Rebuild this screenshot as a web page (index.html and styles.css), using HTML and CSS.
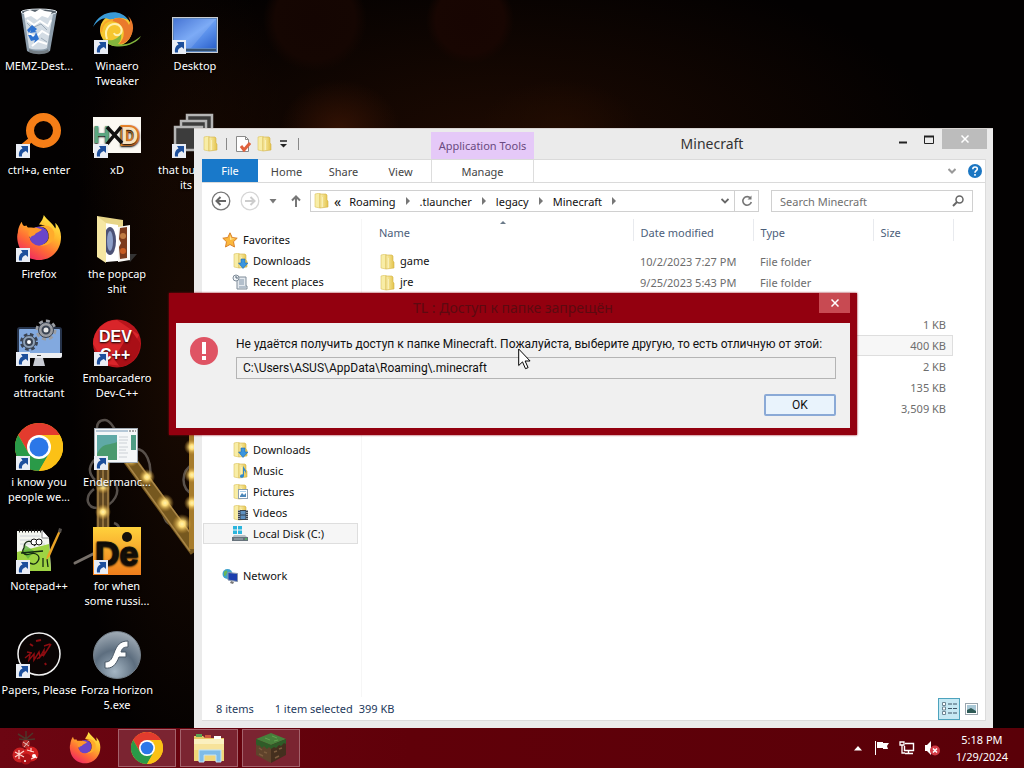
FILE: index.html
```html
<!DOCTYPE html>
<html lang="en">
<head>
  <meta charset="UTF-8">
  <meta name="viewport" content="width=device-width, initial-scale=1.0">
  <title>Desktop</title>
  <link rel="stylesheet" href="styles.css">
</head>
<body>

<!-- shared icons -->
<svg class="defs" width="0" height="0" aria-hidden="true">
  <defs>
    <linearGradient id="gFolder" x1="0" y1="0" x2="1" y2="0">
      <stop offset="0" stop-color="#fbf0ae"/><stop offset="1" stop-color="#e3c34d"/>
    </linearGradient>
    <linearGradient id="gFox" x1="0.8" y1="0" x2="0.2" y2="1">
      <stop offset="0" stop-color="#fff04a"/><stop offset="0.35" stop-color="#ffb62c"/>
      <stop offset="0.65" stop-color="#ff6b35"/><stop offset="1" stop-color="#ee1f68"/>
    </linearGradient>
    <radialGradient id="gFlash" cx="0.45" cy="0.85" r="0.9">
      <stop offset="0" stop-color="#a5b6c4"/><stop offset="0.5" stop-color="#5d6e7f"/><stop offset="1" stop-color="#aab4bd"/>
    </radialGradient>
    <radialGradient id="gGlow">
      <stop offset="0" stop-color="#fff3b0"/><stop offset="0.3" stop-color="#ffdf7a"/><stop offset="1" stop-color="#c08a2a" stop-opacity="0"/>
    </radialGradient>
    <linearGradient id="gScreen" x1="0" y1="0" x2="1" y2="1">
      <stop offset="0" stop-color="#2f63cf"/><stop offset="0.5" stop-color="#6ba0f5"/><stop offset="1" stop-color="#2c62cc"/>
    </linearGradient>
    <linearGradient id="gDe" x1="0" y1="0" x2="0" y2="1">
      <stop offset="0" stop-color="#ffd23c"/><stop offset="1" stop-color="#ef7d1c"/>
    </linearGradient>
    <symbol id="shortcut" viewBox="0 0 14 14">
      <rect width="14" height="14" fill="#e9edf5"/>
      <path d="M3 12.500C2.500 8 4 5.500 6.500 4.500L5 2h7v7L9.800 6.900C7 8 5.500 9.500 6 12.500z" fill="#1d4f9c"/>
    </symbol>
    <symbol id="folder" viewBox="0 0 16 16">
      <path d="M2 1l5-1v15l-5-1z" fill="#f8eda6" stroke="#dcc25e" stroke-width=".6"/>
      <path d="M7 1h6l1 1v5l1 1v6l-8 1z" fill="url(#gFolder)" stroke="#d3b244" stroke-width=".6"/>
      <path d="M9.500 4v10" stroke="#f9efb8"/>
    </symbol>
    <symbol id="chrome" viewBox="0 0 48 48">
      <circle cx="24" cy="24" r="24" fill="#fbc116"/>
      <path d="M3.200 12A24 24 0 0 1 44.800 12H24L13.600 30z" fill="#e33b2e"/>
      <path d="M3.200 12L13.600 30 24 36 34.400 30 24 48A24 24 0 0 1 3.200 12z" fill="#2a9a48"/>
      <path d="M24 12h20.800A24 24 0 0 1 24 48l10.400-18z" fill="#fbc116"/>
      <circle cx="24" cy="24" r="12" fill="#fff"/>
      <circle cx="24" cy="24" r="9.500" fill="#2b77e8"/>
    </symbol>
    <symbol id="firefox" viewBox="0 0 48 48">
      <path d="M29 0c-1 5-3 7-5 10 7 0 12 5 12 12 0 5-5 9-11 9-7 0-11-5-11-10 0-3 2-5 4-6-4 0-6-1-7-4-3 1-4 0-5-4-3 4-4 9-4 11-1 3-1 6 0 11 2 10 10 18 22 18 14 0 23-11 23-24 0-6-2-11-6-15 0 2 1 4 0 6C38 8 33 6 29 0z" fill="url(#gFox)"/>
      <circle cx="24" cy="22" r="10" fill="#6a45c9"/>
      <path d="M7 14c6-2 10 0 14-1l6 2c-1 2-6 3-7 5-1 2-4 1-5 4-3-3-2-6-1-8-2 0-5-1-7-2z" fill="#ff982a"/>
      <path d="M24 12c6 0 11 4 10 12-1 5-5 7-9 8 11 0 16-6 15-13-1-6-7-10-16-7z" fill="#ffab2b"/>
    </symbol>
  </defs>
</svg>

<main class="desktop">
  <svg class="wallpaper-light" width="124" height="154" viewBox="0 0 124 154" aria-hidden="true">
    <g fill="none" stroke="#77706a" stroke-width="2.500" opacity=".7">
      <path d="M27 20C26 9 30 7 35 7c6 0 8 8 12 12"/>
      <path d="M27 45c-8 6-10 14-2 22M24 76c-10 8-8 20 6 19 14-3 22-16 14-27M44 110c6 2 8 10 4 14"/>
      <path d="M66 36c10 0 16 14 14 28M92 88c0 24 8 28 24 20M124 50c-14 8-14 26 0 32"/>
    </g>
    <path d="M5 150l24-12" stroke="#77706a" stroke-width="3" stroke-linecap="round"/>
    <path d="M33 30v98" stroke="#5c4420" stroke-width="13"/>
    <path d="M28 30v98M33 30v98M38 30v98" stroke="#a17f45" stroke-width="1.500"/>
    <path d="M56 42l70 96" stroke="#76581f" stroke-width="13"/>
    <path d="M52 44l68 94M61 40l68 92" stroke="#a98648" stroke-width="1.500"/>
    <path d="M123 20v116" stroke="#a67b2b" stroke-width="8"/>
    <g fill="url(#gGlow)">
      <circle cx="33" cy="48" r="8"/><circle cx="33" cy="73" r="8"/><circle cx="33" cy="99" r="8"/><circle cx="33" cy="122" r="7"/>
      <circle cx="61" cy="46" r="8"/><circle cx="77" cy="64" r="8"/><circle cx="95" cy="90" r="9"/><circle cx="112" cy="111" r="10"/>
      <circle cx="122" cy="34" r="8"/><circle cx="122" cy="62" r="8"/><circle cx="122" cy="90" r="8"/>
    </g>
  </svg>

  <div class="icons">
    <div class="icon">
      <svg viewBox="0 0 48 48">
        <path d="M6 3l6 40c4 3 18 3 23 0l7-40z" fill="#8d9dab"/>
        <path d="M9 6l5 34c4 2 15 2 18 0l6-34z" fill="#d3dce4"/>
        <ellipse cx="24" cy="4" rx="18" ry="3" fill="#56616b" stroke="#dde5eb"/>
        <path d="M9 4l6-2 5 2 5-3 5 2 7 1-4 6-6-2-5 4-6-4-6 2z" fill="#fff"/>
        <path d="M12 12l7 5 6-4 8 5 3-6M14 26l7 3 6-6 7 4M17 38l6-5 9 3" stroke="#fff" fill="none" stroke-width="2"/>
        <path d="M12 15l5 5 9-4 6 6M26 30l6 4" stroke="#9dabb8" fill="none"/>
        <path d="M12 22l5-5 5 4-2 2 2 1-7 1 1-3-2 3zM21 24l3 7-5 4 1-3-4 1-3-6h3l2 2 2-2z" fill="#2f73d0"/>
        <path d="M14 41c5 3 15 3 19 0l1 3c-5 3-15 3-20 0z" fill="#747d84"/>
      </svg>
      <span>MEMZ-Dest...</span>
    </div>
    <div class="icon">
      <svg viewBox="0 0 48 48">
        <circle cx="23" cy="22" r="16" fill="#f6c62f"/>
        <path d="M0 19C6 2 28 0 35 12c-7-3-13-3-17 1C14 8 6 10 0 19z" fill="#3a9ad6"/>
        <path d="M18 13c5-5 15-4 18 4 2-3 1-6-1-9 7 6 7 18-1 25-2 2-5 3-8 3 7-6 8-21-8-23z" fill="#ea7a2c"/>
        <path d="M48 28c-4 9-28 17-38 3 7 3 15 1 18-6 1 6-1 9-3 11 9 2 17-3 23-8z" fill="#83b53d"/>
        <path d="M14 31c-3-8 1-15 8-15 5 0 8 5 6 9-2 3-6 3-7 0" fill="none" stroke="#fff1ae" stroke-width="2"/>
        <path d="M8 24c1-8 6-12 12-12" fill="none" stroke="#f9a629" stroke-width="2"/>
        <use href="#shortcut" x="1" y="32" width="14" height="14"/>
      </svg>
      <span>Winaero<br>Tweaker</span>
    </div>
    <div class="icon">
      <svg viewBox="0 0 48 48">
        <rect x="1.500" y="9.500" width="45" height="35" fill="#5983bd" stroke="#c9cdd3"/>
        <rect x="3" y="11" width="42" height="29" fill="url(#gScreen)"/>
        <path d="M3 11h42L20 40H3z" fill="#fff" opacity=".12"/>
        <path d="M3 41h42v2H3z" fill="#35506f"/>
        <use href="#shortcut" x="1" y="32" width="14" height="14"/>
      </svg>
      <span>Desktop</span>
    </div>

    <div class="icon">
      <svg viewBox="0 0 48 48">
        <path d="M19 27L9 40l-6-5 12-10z" fill="#f57e17"/>
        <circle cx="28.500" cy="18.500" r="13.500" fill="#080200" stroke="#f57e17" stroke-width="8"/>
        <use href="#shortcut" x="1" y="32" width="14" height="14"/>
      </svg>
      <span>ctrl+a, enter</span>
    </div>
    <div class="icon">
      <svg viewBox="0 0 48 48">
        <rect y="5" width="48" height="36" fill="#fbf9f3"/>
        <text x="0" y="31" class="glyph" font-size="24" fill="#5ba681">H</text>
        <text x="28" y="32" class="glyph" font-size="24" fill="#f7e2c0" stroke="#e9842c" stroke-width="4" paint-order="stroke">D</text>
        <path d="M14 15l15 16M28 15L14 32" stroke="#111" stroke-width="3.500"/>
        <use href="#shortcut" x="1" y="32" width="14" height="14"/>
      </svg>
      <span>xD</span>
    </div>
    <div class="icon">
      <svg viewBox="0 0 48 48">
        <g fill="#3c3c3c" stroke="#b5b5b5" stroke-width="2.500">
          <rect x="16" y="3" width="25" height="24"/><rect x="10" y="9" width="25" height="22"/><rect x="4" y="15" width="27" height="23"/>
        </g>
        <use href="#shortcut" x="1" y="32" width="14" height="14"/>
      </svg>
      <span class="label-left">that bu<br><span class="indent">its</span></span>
    </div>

    <div class="icon">
      <svg viewBox="0 0 48 48">
        <use href="#firefox" x="1" y="-1" width="46" height="46"/>
        <use href="#shortcut" x="1" y="32" width="14" height="14"/>
      </svg>
      <span>Firefox</span>
    </div>
    <div class="icon">
      <svg viewBox="0 0 48 48">
        <path d="M32 38l12 0-7 8z" fill="#333"/>
        <path d="M4 0l26 4v12L14 46 4 40z" fill="#e7d588"/>
        <path d="M12 7l13 2v36l-12 1z" fill="#fff"/>
        <ellipse cx="17" cy="25" rx="6" ry="14" fill="#4c5276"/><ellipse cx="17" cy="25" rx="3" ry="10" fill="#8c9fc8"/>
        <path d="M25 11l12-2v35l-12 2z" fill="#f9f7f3"/>
        <path d="M27 12l7-1v31l-7 1-1-12 2-4-2-4z" fill="#7d3b1c"/>
        <circle cx="30" cy="20" r="3" fill="#c07c43"/><circle cx="30" cy="35" r="3" fill="#c85c21"/>
        <path d="M4 0l9 7v40L4 41z" fill="#f6e7a3"/>
      </svg>
      <span>the popcap<br>shit</span>
    </div>
    <div></div>

    <div class="icon">
      <svg viewBox="0 0 48 48">
        <path d="M20 38h8l2 8H18z" fill="#c9ccd4"/>
        <rect x="3" y="8" width="43" height="28" rx="2" fill="#82a9df" stroke="#26334a" stroke-width="2"/>
        <path d="M2 33h45v3q0 2-2 2H4q-2 0-2-2z" fill="#eceef2"/>
        <g stroke="#3a4352">
          <circle cx="31" cy="10" r="9" stroke="#9a9da3" stroke-dasharray="4 3" stroke-width="3" fill="none"/>
          <circle cx="31" cy="10" r="7.500" fill="#9a9da3"/><circle cx="31" cy="10" r="3.500" fill="#e8e8e8" stroke-width="2"/>
          <circle cx="14" cy="22" r="7.500" stroke-dasharray="3.500 2.500" stroke-width="3" fill="none"/>
          <circle cx="14" cy="22" r="6.500" fill="#8da0b5"/><circle cx="14" cy="22" r="3" fill="#fff" stroke-width="2"/>
        </g>
        <path d="M22 35.500h4" stroke="#444"/>
        <use href="#shortcut" x="1" y="32" width="14" height="14"/>
      </svg>
      <span>forkie<br>attractant</span>
    </div>
    <div class="icon">
      <svg viewBox="0 0 48 48">
        <circle cx="24" cy="23.500" r="24" fill="#b9151c"/>
        <path d="M0 24A24 24 0 0 1 24 0l22 15L30 46 12 44z" fill="#d9252a"/>
        <path d="M38 10l9 13a24 24 0 0 1-20 24l-6-8z" fill="#a90f16"/>
        <text x="6" y="22" class="glyph" font-size="16" fill="#fff">DEV</text>
        <text x="7" y="40" class="glyph" font-size="16" fill="#fff">C++</text>
        <use href="#shortcut" x="1" y="32" width="14" height="14"/>
      </svg>
      <span>Embarcadero<br>Dev-C++</span>
    </div>
    <div></div>

    <div class="icon">
      <svg viewBox="0 0 48 48">
        <use href="#chrome" x="0" y="-1" width="48" height="48"/>
        <use href="#shortcut" x="1" y="32" width="14" height="14"/>
      </svg>
      <span>i know you<br>people we...</span>
    </div>
    <div class="icon">
      <svg viewBox="0 0 48 48">
        <rect x="1.500" y="4.500" width="43" height="34" fill="#f5f7f8" stroke="#9fa8b1"/>
        <path d="M3 7h32" stroke="#b4c7d6" stroke-width="2"/><path d="M36 7h7" stroke="#555" stroke-dasharray="2 1"/>
        <rect x="4" y="11" width="20" height="25" fill="#5fa9a6"/><path d="M4 30c6-12 10-8 20-12v18H4z" fill="#4a9a6e"/>
        <path d="M26 13h9M26 16h9M26 19h8M26 23h9M26 26h7M26 29h9M26 33h8" stroke="#cbd0d5"/>
        <rect x="38" y="11" width="5" height="15" fill="#4e9d84"/>
        <use href="#shortcut" x="1" y="32" width="14" height="14"/>
      </svg>
      <span>Endermanc...</span>
    </div>
    <div></div>

    <div class="icon">
      <svg viewBox="0 0 48 48">
        <path d="M2 3h25l7 7 2 33H2z" fill="#f3f5ef"/>
        <path d="M2 24l32-8 2 27H2z" fill="#9ed443"/>
        <path d="M4 3h22" stroke="#222" stroke-width="3" stroke-dasharray="1 2"/>
        <path d="M5 8h20M5 12h22M5 16h25" stroke="#cdd2d8"/>
        <path d="M27 2v8h7" fill="#fff" stroke="#888"/>
        <path d="M10 17l9 6-6 8-5-7z" fill="#5eb23a" opacity=".8"/>
        <path d="M9 20c0-8 8-9 11-2M9 20c-3 4 0 8 6 6s11 2 8 7-8 3-10 0M6 25l22-2M28 30v9M32 31l1 8" fill="none" stroke="#142a12" stroke-width="1.300"/>
        <circle cx="19" cy="14" r="3" fill="#fff" stroke="#111"/><circle cx="24" cy="14" r="3" fill="#fff" stroke="#111"/>
        <path d="M44 2L32 28l-1 4 4-4L46 3z" fill="#e9a326"/><path d="M44 0l3 1-1 4-3-1z" fill="#55504c"/>
        <use href="#shortcut" x="1" y="32" width="14" height="14"/>
      </svg>
      <span>Notepad++</span>
    </div>
    <div class="icon">
      <svg viewBox="0 0 48 48">
        <rect y="-1" width="48" height="48" fill="url(#gDe)"/>
        <text x="2" y="37" class="glyph" font-size="34" fill="#15100a" stroke="#15100a">De</text>
        <circle cx="34" cy="9" r="5" fill="#15100a"/>
        <use href="#shortcut" x="1" y="32" width="14" height="14"/>
      </svg>
      <span>for when<br>some russi...</span>
    </div>
    <div></div>

    <div class="icon">
      <svg viewBox="0 0 48 48">
        <circle cx="24" cy="22" r="21" fill="#0a0404" stroke="#f2f2f2" stroke-width="1.500"/>
        <path d="M10 26l5-4-1 6 5-6v6l5-8 1 5 4-7v5l7-11M12 20l5 1M22 27l8-6M29 14l6-2" fill="none" stroke="#8e0c11" stroke-width="1.500"/>
        <path d="M15 12l3 2M30 31l1 2M21 9l5-1" stroke="#8e0c11" stroke-width="2"/>
        <use href="#shortcut" x="1" y="32" width="14" height="14"/>
      </svg>
      <span>Papers, Please</span>
    </div>
    <div class="icon">
      <svg viewBox="0 0 48 48">
        <circle cx="24" cy="23" r="23.500" fill="url(#gFlash)" stroke="#737e88"/>
        <path d="M35 9v6c-4 0-6 1-7 5h5v5h-7c-3 8-7 12-14 11v-6c6 0 7-4 9-9 3-8 6-12 14-12z" fill="#fff" stroke="#4a5866"/>
      </svg>
      <span>Forza Horizon<br>5.exe</span>
    </div>
  </div>

  <section class="window">
    <header class="titlebar">
      <div class="quick">
        <svg width="16" height="16"><use href="#folder"/></svg>
        <i class="sep"></i>
        <svg width="16" height="16" viewBox="0 0 16 16"><path d="M1.500.5h9l3 3v12h-12z" fill="#fff" stroke="#8a8a8a"/><path d="M10.500.5v3h3" fill="none" stroke="#8a8a8a"/><path d="M6 10l3 4 6-7" stroke="#e0623e" stroke-width="3" fill="none"/></svg>
        <svg width="16" height="16"><use href="#folder"/></svg>
        <svg class="quick-more" width="7" height="8" viewBox="0 0 7 8"><path d="M0 1h7" stroke="#222" stroke-width="1.500"/><path d="M0 4h7L3.500 7.500z" fill="#222"/></svg>
        <i class="sep"></i>
      </div>
      <div class="tool-tab">Application Tools</div>
      <h1>Minecraft</h1>
      <div class="controls">
        <button aria-label="Minimize"><svg width="8" height="10" viewBox="0 0 8 10"><path d="M0 8.500h8" stroke="#222" stroke-width="2"/></svg></button>
        <button aria-label="Maximize"><svg width="10" height="9" viewBox="0 0 10 9"><path d="M.5 1v7.500h9V1" fill="none" stroke="#222"/><path d="M0 1.500h10" stroke="#222" stroke-width="2"/></svg></button>
        <button class="close" aria-label="Close"><svg width="8" height="8" viewBox="0 0 8 8"><path d="M.5.5l7 7M7.500.5l-7 7" stroke="#fff" stroke-width="1.500"/></svg></button>
      </div>
    </header>

    <div class="client">
      <nav class="ribbon">
        <button class="file">File</button>
        <button>Home</button>
        <button>Share</button>
        <button>View</button>
        <button class="manage">Manage</button>
        <div class="ribbon-end">
          <svg width="8" height="6" viewBox="0 0 8 6"><path d="M.5 1L4 4.500 7.500 1" fill="none" stroke="#999" stroke-width="2"/></svg>
          <svg width="14" height="14" viewBox="0 0 14 14"><circle cx="7" cy="7" r="7" fill="#1b76c2"/><path d="M4.800 5.200c0-3 4.600-2.900 4.500-.2C9.300 6.700 7 6.800 7 8.800M7 10v1.800" stroke="#fff" stroke-width="1.600" fill="none"/></svg>
        </div>
      </nav>

      <div class="address-row">
        <button aria-label="Back"><svg width="20" height="20" viewBox="0 0 20 20"><circle cx="10" cy="10" r="8.800" fill="#fff" stroke="#777" stroke-width="1.300"/><path d="M15 10H6M9.500 6L5.500 10l4 4" stroke="#666" stroke-width="2" fill="none"/></svg></button>
        <button aria-label="Forward"><svg width="20" height="20" viewBox="0 0 20 20"><circle cx="10" cy="10" r="8.800" fill="#fff" stroke="#d6d6d6" stroke-width="1.300"/><path d="M5 10h9M10.500 6l4 4-4 4" stroke="#ccc" stroke-width="2" fill="none"/></svg></button>
        <button aria-label="Recent locations"><svg width="8" height="5" viewBox="0 0 8 5"><path d="M.5 0h7L4 4.500z" fill="#777"/></svg></button>
        <button aria-label="Up"><svg width="10" height="12" viewBox="0 0 10 12"><path d="M5 12V2M1 5.500l4-4 4 4" stroke="#777" stroke-width="2" fill="none"/></svg></button>
        <div class="address">
          <svg width="16" height="16"><use href="#folder"/></svg>
          <span class="chev">«</span>
          <a href="#">Roaming</a><i class="crumb"></i>
          <a href="#">.tlauncher</a><i class="crumb"></i>
          <a href="#">legacy</a><i class="crumb"></i>
          <a href="#">Minecraft</a><i class="crumb"></i>
          <svg class="drop" width="8" height="6" viewBox="0 0 8 6"><path d="M.5 1L4 4.500 7.500 1" fill="none" stroke="#666" stroke-width="1.800"/></svg>
          <button class="refresh" aria-label="Refresh"><svg width="12" height="12" viewBox="0 0 12 12"><path d="M9.500 3.200A4.300 4.300 0 1 0 10.300 7" fill="none" stroke="#777" stroke-width="1.600"/><path d="M6.500 4.500H10.500V.5z" fill="#777"/></svg></button>
        </div>
        <div class="search">
          <input type="text" placeholder="Search Minecraft" aria-label="Search Minecraft">
          <svg width="12" height="12" viewBox="0 0 12 12"><circle cx="7.500" cy="4.500" r="3.500" fill="none" stroke="#666" stroke-width="1.500"/><path d="M5 7L1 11" stroke="#666" stroke-width="2"/></svg>
        </div>
      </div>

      <div class="panes">
        <aside class="nav">
          <div class="nav-row root"><svg width="16" height="16" viewBox="0 0 16 16"><path d="M8 .8l2.200 4.700 5 .7-3.700 3.500 1 5.300L8 12.500 3.500 15l1-5.300L.8 6.200l5-.7z" fill="#fbb83c" stroke="#d9822b"/><path d="M8 3l1.200 3.500H13L8 8z" fill="#ffe79a"/></svg>Favorites</div>
          <div class="nav-row"><svg width="16" height="16" viewBox="0 0 16 16"><use href="#folder"/><path d="M9 6h4v4h3l-5 5.500L6.500 10H9z" fill="#3a95df" stroke="#1c6ab3" stroke-width=".6"/></svg>Downloads</div>
          <div class="nav-row"><svg width="16" height="16" viewBox="0 0 16 16"><path d="M4 3h10v9h1v3H5V5z" fill="#e4e9ee" stroke="#7f8c99"/><path d="M7 6h5M7 8h5M7 10h5M7 13h7" stroke="#8296aa"/><circle cx="4" cy="4" r="3" fill="#eef2f6" stroke="#7f8c99"/><path d="M4 2v2h2" stroke="#567" fill="none"/></svg>Recent places</div>

          <div class="nav-group">
            <div class="nav-row"><svg width="16" height="16" viewBox="0 0 16 16"><use href="#folder"/><path d="M9 6h4v4h3l-5 5.500L6.500 10H9z" fill="#3a95df" stroke="#1c6ab3" stroke-width=".6"/></svg>Downloads</div>
            <div class="nav-row"><svg width="16" height="16" viewBox="0 0 16 16"><use href="#folder"/><path d="M11 2c0 3 4 4 3 9-.3-2-1-3-2-3.500V13c0 2-4 2.500-4 .5S10 11 11 11.500z" fill="#2f86cc"/></svg>Music</div>
            <div class="nav-row"><svg width="16" height="16" viewBox="0 0 16 16"><use href="#folder"/><rect x="6.500" y="5.500" width="9" height="9" fill="#fff" stroke="#8da0b2"/><path d="M8 12l2-3 2 2 2-2v4H8z" fill="#4b87b9"/><path d="M8 7.500h6" stroke="#a9d0ec"/></svg>Pictures</div>
            <div class="nav-row"><svg width="16" height="16" viewBox="0 0 16 16"><use href="#folder"/><rect x="6" y="5" width="10" height="10" fill="#39414d"/><path d="M7 5v10M15 5v10" stroke="#fff" stroke-dasharray="1 1"/><path d="M8.500 6h5v3.500h-5zM8.500 10.500h5V14h-5z" fill="#5d8fc0"/></svg>Videos</div>
            <div class="nav-row selected"><svg width="16" height="16" viewBox="0 0 16 16"><path d="M1 0h4v3.500H1zM6 0h4v3.500H6zM1 4.500h4V8H1zM6 4.500h4V8H6z" fill="#2bb5dd"/><path d="M2 9h11l3 3H0z" fill="#b8c0c6"/><path d="M0 11h16v4H0z" fill="#66727b"/><path d="M2 13h9" stroke="#a7b2ba"/><path d="M13 13h2" stroke="#4ce053"/></svg>Local Disk (C:)</div>
          </div>

          <div class="nav-row root network"><svg width="16" height="16" viewBox="0 0 16 16"><circle cx="5.500" cy="6" r="5" fill="#3fa2cc"/><path d="M2 4c3-3 4-1 3 1s-1 3-3 3zM6 8l3-4 1 4z" fill="#69b658"/><path d="M6 4.500l9.500 1v8L6 12z" fill="#1b3fae" stroke="#8896ab"/><path d="M9 13l3 1-1 2-3-1z" fill="#777"/></svg>Network</div>
        </aside>

        <div class="list">
          <table>
            <colgroup><col class="c-name"><col class="c-date"><col class="c-date"><col class="c-size"></colgroup>
            <thead>
              <tr><th>Name<i class="sort"></i></th><th>Date modified</th><th>Type</th><th>Size</th></tr>
            </thead>
            <tbody>
              <tr><td><svg width="16" height="16"><use href="#folder"/></svg>game</td><td>10/2/2023 7:27 PM</td><td>File folder</td><td></td></tr>
              <tr><td><svg width="16" height="16"><use href="#folder"/></svg>jre</td><td>9/25/2023 5:43 PM</td><td>File folder</td><td></td></tr>
              <tr><td></td><td></td><td></td><td></td></tr>
              <tr><td></td><td></td><td></td><td>1 KB</td></tr>
              <tr class="selected"><td></td><td></td><td></td><td>400 KB</td></tr>
              <tr><td></td><td></td><td></td><td>2 KB</td></tr>
              <tr><td></td><td></td><td></td><td>135 KB</td></tr>
              <tr><td></td><td></td><td></td><td>3,509 KB</td></tr>
            </tbody>
          </table>
        </div>
      </div>

      <footer class="status">
        <span class="count">8 items</span>
        <span>1 item selected</span>
        <span class="size">399 KB</span>
        <button class="view active" aria-label="Details"><svg width="15" height="13" viewBox="0 0 15 13"><path d="M.5.5h3v3h-3zM.5 5h3v3h-3zM.5 9.500h3v3h-3z" fill="#fff" stroke="#6d8593"/><path d="M6 2h4M11 2h4M6 6.500h4M11 6.500h4M6 11h4M11 11h4" stroke="#3d5566"/></svg></button>
        <button class="view" aria-label="Large icons"><svg width="13" height="12" viewBox="0 0 13 12"><rect x=".5" y=".5" width="12" height="11" fill="#fff" stroke="#9aa5ad"/><path d="M2 2h9v8H2z" fill="#a9c8d6"/><path d="M2 7l4-2 5 3v2H2z" fill="#2e5a56"/></svg></button>
      </footer>
    </div>
  </section>

  <section class="dialog" role="dialog" aria-labelledby="dialogTitle">
    <header>
      <h2 id="dialogTitle">TL : Доступ к папке запрещён</h2>
      <button class="dialog-close" aria-label="Close"><svg width="8" height="8" viewBox="0 0 8 8"><path d="M.5.5l7 7M7.500.5l-7 7" stroke="#fff" stroke-width="1.500"/></svg></button>
    </header>
    <div class="dialog-body">
      <svg width="28" height="28" viewBox="0 0 28 28"><circle cx="14" cy="14" r="14" fill="#df5464"/><path d="M14 5v12M14 19v4" stroke="#fff" stroke-width="4"/></svg>
      <div class="message">
        <label for="path">Не удаётся получить доступ к папке Minecraft. Пожалуйста, выберите другую, то есть отличную от этой:</label>
        <input id="path" type="text" readonly value="C:\Users\ASUS\AppData\Roaming\.minecraft">
        <button class="ok">OK</button>
      </div>
    </div>
  </section>

  <svg class="cursor" width="13" height="22" viewBox="0 0 13 22"><path d="M.7 1v16.500l3.800-3.600 3 6.800 2.600-1.100-3-6.600h5z" fill="#fff" stroke="#000"/></svg>
</main>

<footer class="taskbar">
  <button class="task" aria-label="Start"><svg width="32" height="36" viewBox="0 0 32 36">
    <path d="M16 1v10M8 4l8 5 7-6M9 9l7 1 9-1" stroke="#4e352a" stroke-width="1.500" fill="none"/>
    <circle cx="16" cy="14" r="4" fill="#b22a28"/><path d="M13 12l6 4M19 11l-5 6" stroke="#e3bfb9"/>
    <circle cx="10" cy="25" r="7.500" fill="#c91f22"/><circle cx="21" cy="24" r="7.500" fill="#d31f20"/><circle cx="16" cy="29" r="5.500" fill="#aa1016"/>
    <path d="M9 20v9M5 22l9 5M14 21l-9 6M21 18v4M17 20l7 2M24 25l3 3M21 29l5-2" stroke="#ffd5cf" stroke-width="1.200"/>
    <circle cx="24" cy="26" r="2" fill="#fff"/><circle cx="15" cy="31" r="1" fill="#fff"/></svg></button>
  <button class="task" aria-label="Firefox"><svg width="32" height="32"><use href="#firefox"/></svg></button>
  <button class="task open" aria-label="Chrome"><svg width="32" height="32"><use href="#chrome"/></svg></button>
  <button class="task open" aria-label="File Explorer"><svg width="32" height="30" viewBox="0 0 32 30">
    <path d="M1 3h9l2 2h19v23H1z" fill="#e9c865"/><path d="M3 1h6v3H3z" fill="#5ca452"/><path d="M12 2h6v3h-6z" fill="#d05a3d"/><path d="M21 3h7v3h-7z" fill="#fff"/>
    <path d="M1 6h30v22H1z" fill="#f7e39a"/><path d="M1 6h30v5H1z" fill="#fbf0bf"/><path d="M1 17h30v11H1z" fill="#f1d679"/>
    <path d="M6 29V17h22v12h-5v-7H11v7z" fill="#7fbce8" stroke="#c3e3f8"/></svg></button>
  <button class="task open" aria-label="Minecraft"><svg width="32" height="32" viewBox="0 0 32 32">
    <path d="M1 7l15 6v18L1 23z" fill="#5f432b"/><path d="M31 7l-15 6v18l15-8z" fill="#442f1e"/>
    <path d="M16 1l15 6-15 6L1 7z" fill="#47803b"/>
    <path d="M1 7l15 6v4l-2-2-2 2-3-3-2 2-3-3-1 1-2-2zM31 7l-15 6v4l3-2 2 1 3-3 2 1 3-3 2 1z" fill="#2f5c28"/>
    <path d="M4 16l3 2M9 20l3 1M4 22l4 2M19 20l3-1M24 17l3-1M20 26l4-2" stroke="#7b5b3d" stroke-width="1.500"/>
    <path d="M10 6l5 2M17 4l5 2M19 9l4-1" stroke="#62a04f"/></svg></button>

  <div class="tray">
    <svg class="tray-more" width="8" height="5" viewBox="0 0 8 5"><path d="M4 0l4 4.500H0z" fill="#fff"/></svg>
    <svg width="16" height="16" viewBox="0 0 16 16"><path d="M1.500 1v14" stroke="#fff"/><path d="M3 2h6v1h6l-2 3 1 3H9V8H3z" fill="#fff"/></svg>
    <svg width="16" height="16" viewBox="0 0 16 16"><path d="M6 3.500h8.500v7H5.500V6M9.500 11v2M6 13.500h8" fill="none" stroke="#fff" stroke-width="1.400"/><path d="M1 2h4v3H1zM3 5v8h3" fill="none" stroke="#fff" stroke-width="1.300"/></svg>
    <svg width="16" height="16" viewBox="0 0 16 16"><path d="M1 5h2l4-4v14l-4-4H1z" fill="#fff"/><circle cx="11" cy="10.500" r="5" fill="#d33a45"/><path d="M9 8.500l4 4M13 8.500l-4 4" stroke="#fff" stroke-width="1.500"/></svg>
    <div class="clock">5:18 PM<br>1/29/2024</div>
  </div>
</footer>

</body>
</html>
```
FILE: styles.css
```css
* {
  box-sizing: border-box;
}

body {
  margin: 0;
  height: 100vh;
  display: flex;
  flex-direction: column;
  overflow: hidden;
  background-color: #050101;
  font-family: "Noto Sans", "Open Sans", sans-serif;
  font-size: 11px;
  line-height: 15px;
  color: #111;
}

button, input {
  font: inherit;
  color: inherit;
}

button {
  padding: 0;
  border: none;
  background: none;
  display: flex;
  align-items: center;
  justify-content: center;
}

svg {
  display: block;
  flex: none;
}

.defs {
  position: absolute;
}

.glyph {
  font-family: "Liberation Sans", sans-serif;
  font-weight: bold;
}

/* desktop */
.desktop {
  position: relative;
  flex: 1;
  min-height: 0;
  background:
    radial-gradient(ellipse 60px 50px at 340px 130px, #331204, transparent),
    radial-gradient(ellipse 80px 50px at 560px 130px, #210c02, transparent),
    radial-gradient(circle at 470px 20px, #170502 0, #180602 34px, transparent 44px),
    radial-gradient(circle at 315px 20px, #140502 0, #150602 40px, transparent 52px),
    radial-gradient(ellipse 440px 180px at 500px 140px, #1d0a02, transparent),
    radial-gradient(ellipse 120px 420px at 190px 360px, #1b0b02, transparent),
    #030101;
}

.wallpaper-light {
  position: absolute;
  left: 70px;
  top: 413px;
}

.icons {
  position: relative;
  display: grid;
  grid-template-columns: repeat(3, 78px);
  grid-auto-rows: 104px;
}

.icon {
  padding-top: 8px;
  display: flex;
  flex-direction: column;
  align-items: center;
  gap: 2px;
  color: #fff;
  text-align: center;
  white-space: nowrap;
  text-shadow: 0 1px 2px #000;
}

.icon svg {
  width: 48px;
  height: 48px;
  overflow: visible;
}

.label-left {
  width: 74px;
  text-align: left;
}

.indent {
  padding-left: 22px;
}

/* explorer window */
.window {
  position: absolute;
  left: 194px;
  right: 31px;
  top: 128px;
  bottom: 0;
  display: flex;
  flex-direction: column;
  padding: 0 7px 7px 8px;
  background-color: #ebebeb;
  border-top: 1px solid #d8d4d2;
}

.titlebar {
  display: flex;
  height: 30px;
}

.quick {
  display: flex;
  align-items: center;
  gap: 5px;
  width: 229px;
}

.quick-more {
  margin: 0 3px;
}

.sep {
  width: 1px;
  height: 12px;
  margin: 0 3px;
  background-color: #888;
}

.tool-tab {
  width: 103px;
  margin-top: 3px;
  background-color: #e5c9f8;
  color: #6a4a80;
  line-height: 28px;
  text-align: center;
  white-space: nowrap;
}

.titlebar h1 {
  flex: 1;
  margin: 0;
  font-size: 14px;
  font-weight: normal;
  line-height: 30px;
  text-align: center;
  color: #333;
}

.controls {
  display: flex;
  margin-right: -1px;
}

.controls button {
  width: 26px;
  height: 20px;
}

.controls .close {
  width: 45px;
  background-color: #bcbcbc;
}

.client {
  flex: 1;
  min-height: 0;
  display: flex;
  flex-direction: column;
  background-color: #fff;
  border: 1px solid #dcdcdc;
  border-width: 0 1px 1px 0;
}

.ribbon {
  display: flex;
  height: 24px;
  border-top: 1px solid #dadada;
  border-bottom: 1px solid #dadada;
}

.ribbon button {
  width: 57px;
  color: #444;
}

.ribbon .file {
  width: 56px;
  margin-top: -1px;
  background-color: #1979ca;
  color: #fff;
}

.ribbon .manage {
  width: 103px;
  margin-left: 2px;
  border: 1px solid #ddd;
  border-width: 0 1px;
}

.ribbon-end {
  display: flex;
  align-items: center;
  gap: 12px;
  margin-left: auto;
  padding-right: 3px;
}

.address-row {
  display: flex;
  align-items: center;
  height: 36px;
  padding: 0 12px 0 9px;
}

.address-row > button {
  margin-right: 9px;
}

.address-row > button:nth-of-type(3) {
  margin-right: 14px;
}

.address {
  flex: 1;
  display: flex;
  align-items: center;
  height: 22px;
  padding-left: 2px;
  border: 1px solid #d0d0d0;
}

.address a {
  color: #111;
  text-decoration: none;
}

.chev {
  margin: 0 8px 0 5px;
  font-size: 14px;
}

.crumb {
  width: 4px;
  margin: 0 10px;
  border: 4px solid transparent;
  border-left-color: #777;
  border-right: none;
}

.drop {
  margin-left: auto;
}

.refresh {
  width: 24px;
  height: 20px;
  margin-left: 5px;
  border-left: 1px solid #d0d0d0;
}

.search {
  display: flex;
  align-items: center;
  width: 202px;
  height: 22px;
  margin-left: 12px;
  padding: 0 8px;
  border: 1px solid #d0d0d0;
}

.search input {
  flex: 1;
  min-width: 0;
  padding: 0;
  border: none;
  outline: none;
}

.search input::placeholder {
  color: #707070;
}

.panes {
  flex: 1;
  min-height: 0;
  display: flex;
}

.nav {
  width: 160px;
  padding-top: 10px;
  border-right: 1px solid #f6f6f6;
}

.nav-row {
  display: flex;
  align-items: center;
  gap: 5px;
  height: 21px;
  margin: 0 3px 0 1px;
  padding-left: 28px;
  border: 1px solid transparent;
}

.nav-row.root {
  padding-left: 18px;
}

.nav-row.selected {
  background-color: #f6f6f6;
  border-color: #dedede;
}

.nav-group {
  margin-top: 147px;
}

.network {
  margin-top: 21px;
}

.list {
  flex: 1;
  padding-left: 10px;
}

.list table {
  width: 581px;
  table-layout: fixed;
  border-collapse: collapse;
}

.c-name {
  width: 261px;
}

.c-date {
  width: 120px;
}

.c-size {
  width: 80px;
}

.list th {
  position: relative;
  height: 22px;
  padding: 5px 7px 0;
  border-right: 1px solid #e8eaee;
  font-weight: normal;
  text-align: left;
  color: #4c607a;
}

.list tbody::before {
  content: "";
  display: block;
  height: 10px;
}

.list td {
  height: 21px;
  padding: 0 7px;
  color: #6d6d6d;
  white-space: nowrap;
}

.list td:first-child {
  color: #111;
}

.list td svg {
  display: inline-block;
  margin-right: 5px;
  vertical-align: middle;
}

.list td:last-child {
  text-align: right;
}

.list .selected {
  background-color: #f7f7f7;
  outline: 1px solid #dedede;
  outline-offset: -1px;
}

/* sort arrow sits above the header text */
.sort {
  position: absolute;
  left: 49%;
  top: 2px;
  border: 3px solid transparent;
  border-top: none;
  border-bottom-color: #6b7a89;
}

.status {
  display: flex;
  align-items: center;
  height: 23px;
  padding: 0 3px 0 14px;
  color: #1e395b;
}

.status .count {
  margin-right: 21px;
}

.status .size {
  margin-left: 6px;
  margin-right: auto;
}

.view {
  width: 22px;
  height: 22px;
}

.view.active {
  background-color: #c5e8f3;
  border: 1px solid #4da3bd;
}

/* error dialog */
.dialog {
  position: absolute;
  left: 169px;
  top: 293px;
  width: 688px;
  padding: 0 7px 7px;
  background-color: #93000f;
  box-shadow: 0 0 2px #93000f;
}

.dialog header {
  display: flex;
  height: 30px;
}

.dialog h2 {
  flex: 1;
  margin: 0;
  padding-left: 31px;
  font-size: 14px;
  font-weight: normal;
  line-height: 30px;
  text-align: center;
  color: #5c0a10;
}

.dialog-close {
  width: 31px;
  height: 20px;
  background-color: #c84a52;
}

.dialog-body {
  display: flex;
  gap: 18px;
  padding: 14px 14px 12px 14px;
  background-color: #f0f0f0;
  font-family: Roboto, "Noto Sans", sans-serif;
  font-size: 12px;
}

.message {
  flex: 1;
  min-width: 0;
  display: flex;
  flex-direction: column;
}

.message label {
  margin-bottom: 5px;
  white-space: nowrap;
}

.message input {
  height: 22px;
  padding: 0 6px;
  border: 1px solid #b4b4b4;
  background-color: #f0f0f0;
}

.ok {
  align-self: flex-end;
  width: 72px;
  height: 22px;
  margin-top: 15px;
  border: 2px solid #8aa9d6;
  border-radius: 2px;
  background-color: #e9f3fc;
}

.cursor {
  position: absolute;
  left: 518px;
  top: 348px;
}

/* taskbar */
.taskbar {
  display: flex;
  align-items: center;
  gap: 4px;
  height: 40px;
  background: linear-gradient(90deg, #6c0612, #600009 40%, #5a0008);
}

.task {
  width: 58px;
  height: 38px;
}

.task:first-child {
  width: 52px;
}

.task.open {
  border: 1px solid #a4626c;
  background-color: #7b2431;
}

.tray {
  display: flex;
  align-items: center;
  gap: 9px;
  margin-left: auto;
  padding-right: 16px;
  color: #fff;
}

.tray-more {
  margin-right: 3px;
}

.clock {
  margin-left: 7px;
  line-height: 17px;
  text-align: center;
}
```
